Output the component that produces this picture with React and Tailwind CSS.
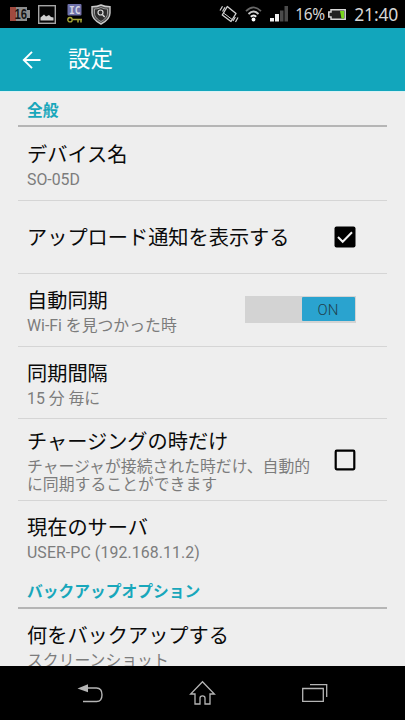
import React from 'react';

function StatusBar() {
  return (
    <div className="flex h-7 shrink-0 items-center justify-between bg-black pl-[10px] pr-[7px]">
      <div className="flex items-center">
        {/* Battery percent */}
        <svg width="20" height="16" viewBox="0 0 20 16">
          <path d="M0 1h17v3h3v8h-3v3H0z" fill="#8d8d8d" />
          <path d="M0 1h6v14H0z" fill="#a04a3f" />
          <text x="4.500" y="13" fill="#161616" fontSize="14" fontWeight="700" fontFamily="Liberation Sans, sans-serif" textLength="12.500" lengthAdjust="spacingAndGlyphs">16</text>
        </svg>
        <svg className="ml-[8px]" width="18" height="19" viewBox="0 0 18 19">
          <rect x=".7" y=".7" width="16.600" height="17.600" fill="#050505" stroke="#a5a5a5" strokeWidth="1.400" />
          <path d="M2.500 15.500v-3l3.500-3 2 2 3-1.500 2 2 2.500.5v3z" fill="#cfcfcf" />
        </svg>
        <svg className="ml-[11px]" width="16" height="20" viewBox="0 0 16 20">
          <rect x=".5" y="0" width="14" height="11.500" rx="1" fill="#6e70a8" />
          <text x="2" y="9.500" fill="#d5d5e2" fontSize="11" fontWeight="700" fontFamily="DejaVu Sans Mono, monospace" textLength="11.500" lengthAdjust="spacingAndGlyphs">IC</text>
          <path d="M5.500 15.500h9.500M11 15.500v3M14 15.500v3" fill="none" stroke="#a6a637" strokeWidth="1.500" />
          <circle cx="3" cy="15.700" r="2.200" fill="none" stroke="#a6a637" strokeWidth="1.400" />
        </svg>
        <svg className="ml-[8px]" width="20" height="21" viewBox="0 0 20 21">
          <path d="M10 1C7 2.500 4 2.800 1 2.800V9c0 5 4 8.500 9 11 5-2.500 9-6 9-11V2.800C16 2.800 13 2.500 10 1z" fill="#4d4d4d" stroke="#c9c9c9" strokeWidth="1.400" />
          <path d="M10 3.500C8 4.500 6 5 3.500 5v4c0 4 3 6.500 6.500 8.500 3.500-2 6.500-4.500 6.500-8.500V5C14 5 12 4.500 10 3.500z" fill="#2c2c2c" stroke="#9c9c9c" />
          <circle cx="9.500" cy="8.500" r="2.500" fill="none" stroke="#ddd" strokeWidth="1.200" />
          <path d="m11.500 10.700 2.200 2.300" stroke="#ddd" strokeWidth="1.400" />
        </svg>
      </div>

      <div className="flex items-center text-[#d6d6d6]">
        {/* Vibrate */}
        <svg width="20" height="20" viewBox="0 0 20 20" fill="none" stroke="#d0d0d0">
          <path d="m8.300 2.500 8.700 7-5 8-8.700-6.500z" strokeWidth="1.400" strokeLinejoin="round" />
          <path d="m4.500 9 8.700 6.500" strokeWidth="1" />
          <path d="M1 6.500 3.500 2.300M3.500 7.500 6 3.300M14 17l2.300-4M16.500 18l2.500-4.500" strokeWidth="1.200" />
        </svg>
        <svg className="ml-[6px]" width="17" height="16" viewBox="0 0 17 16" fill="none">
          <path d="M1 5.200Q8.500-2.500 16 5.200" stroke="#686868" strokeWidth="1.700" />
          <path d="M3.500 8Q8.500 3 13.500 8" stroke="#c8c8c8" strokeWidth="1.900" />
          <path d="M5.800 10.800Q8.500 8.300 11.200 10.800" stroke="#eee" strokeWidth="1.900" />
          <circle cx="8.500" cy="13.500" r="1.900" fill="#fff" />
        </svg>
        <svg className="ml-[8px]" width="19" height="16" viewBox="0 0 19 16">
          <path d="M0 12h4v3.500H0zM5 8h4v7.500H5z" fill="#f0f0f0" />
          <path d="M10 4.500h3.500v11H10zM14.500 0H18v15.500h-3.500z" fill="#4b4b4b" />
        </svg>
        <span className="ml-[6px] w-[29px] whitespace-nowrap font-['Noto_Sans','Open_Sans',sans-serif] text-[15.5px] leading-[30px] tracking-[-0.4px]">16%</span>
        <svg className="ml-[4px]" width="18" height="11" viewBox="0 0 18 11">
          <path d="M3 .8h14.200v9.400H3V8H.8V3H3z" fill="#222" stroke="#d8d8d8" strokeWidth="1.500" />
          <path d="M12 2h4v7.500h-2.500z" fill="#78d51c" />
        </svg>
        <span className="ml-[8px] whitespace-nowrap font-['Noto_Sans','Open_Sans',sans-serif] text-[17.5px] leading-[30px] tracking-[-0.2px]">21:40</span>
      </div>
    </div>
  );
}

function Header() {
  return (
    <div className="flex h-[64px] shrink-0 items-center border-b border-[#d9f2f5] bg-[#12a6bc] pl-[22px]">
      <svg width="20" height="20" viewBox="0 0 20 20" fill="none" stroke="#fff" strokeWidth="1.900">
        <path d="M18.500 10H2M10 1.800 1.800 10l8.200 8.200" />
      </svg>
      <h1 className="ml-[26px] pb-[2px] text-[22.5px] leading-8 text-white">設定</h1>
    </div>
  );
}

function SectionTitle({ children, className }) {
  return (
    <h2 className={`shrink-0 border-b-2 border-[#b5b5b5] pl-[9px] text-[15.75px] font-bold text-[#18a7bb] ${className}`}>
      {children}
    </h2>
  );
}

function Row({ title, summary, className, children }) {
  return (
    <div className={`flex shrink-0 items-center border-b border-[#d5d5d5] pl-[9px] pr-[31px] ${className}`}>
      <div className={`min-w-0 flex-1 ${summary ? 'pt-[2px]' : 'pt-px'}`}>
        <p className="whitespace-nowrap text-[20.2px] leading-[28px] text-[#0a0a0a]">{title}</p>
        {summary && <p className="mt-[2px] whitespace-pre-line text-[15.85px] leading-[18px] text-[#7c7c7c]">{summary}</p>}
      </div>
      {children}
    </div>
  );
}

function Checkbox({ checked }) {
  return (
    <svg className="shrink-0" width="22" height="22" viewBox="0 0 22 22">
      {checked ? (
        <>
          <rect x=".5" y=".5" width="21" height="21" rx="2" fill="#000" />
          <path d="m4 11 4.700 4.800L18 6.200" fill="none" stroke="#f2f2f2" strokeWidth="2" />
        </>
      ) : (
        <rect x="1.700" y="1.700" width="18.600" height="18.600" rx="1" fill="none" stroke="#000" strokeWidth="2.200" />
      )}
    </svg>
  );
}

function Toggle() {
  return (
    <div className="mb-[2px] flex h-[27px] w-[111px] shrink-0 justify-end bg-[#d3d3d3] p-[1.5px]">
      <div className="flex w-[53px] items-center justify-center rounded-[1px] bg-[#2aa3cf] pt-[2px] text-[15px] font-light text-[#20414d]">
        ON
      </div>
    </div>
  );
}

function NavBar() {
  return (
    <div className="flex h-[54px] shrink-0 items-center bg-black pl-[77px]">
      <svg width="27" height="20" viewBox="0 0 27 20">
        <path d="M10 5h9.500q5.500 0 5.500 6.800T19.500 18.500H6" fill="none" stroke="#b5b5b5" strokeWidth="1.400" />
        <path d="M.5 5.500 11 1.300v8z" fill="#b5b5b5" />
      </svg>
      <svg className="ml-[85px]" width="27" height="26" viewBox="0 0 27 26" fill="none" stroke="#b5b5b5" strokeWidth="1.300">
        <path d="M13.500 1.700 1.600 14H6v10h5v-6q0-2.200 2.500-2.200T16 18v6h5V14h4.400z" />
      </svg>
      <svg className="ml-[85px]" width="27" height="20" viewBox="0 0 27 20" fill="none" stroke="#b5b5b5" strokeWidth="1.300">
        <path d="M1.700 5.500h20.600v12.800H1.700zM9 1.700h16.700V14" />
      </svg>
    </div>
  );
}

export default function App() {
  return (
    <div className="flex h-[720px] w-[405px] flex-col overflow-hidden bg-[#eee] font-['Roboto','Noto_Sans_CJK_JP',sans-serif]">
      <StatusBar />
      <Header />

      <div className="flex min-h-0 flex-1 flex-col overflow-hidden pl-[18px] pr-[18px]">
        <SectionTitle className="h-[35px] leading-[37px]">全般</SectionTitle>
        <Row className="h-[74px]" title="デバイス名" summary="SO-05D" />
        <Row className="h-[73px]" title="アップロード通知を表示する">
          <Checkbox checked />
        </Row>
        <Row className="h-[73px]" title="自動同期" summary="Wi-Fi を見つかった時">
          <Toggle />
        </Row>
        <Row className="h-[72px]" title="同期間隔" summary="15 分 毎に" />
        <Row className="h-[82px]" title="チャージングの時だけ" summary={'チャージャが接続された時だけ、自動的\nに同期することができます'}>
          <Checkbox />
        </Row>
        <Row className="h-[72px] border-transparent" title="現在のサーバ" summary={<span className="tracking-[0.1px]">USER-PC (192.168.11.2)</span>} />
        <SectionTitle className="h-[36px] leading-[38px]">バックアップオプション</SectionTitle>
        <Row className="h-[73px]" title="何をバックアップする" summary="スクリーンショット" />
      </div>

      <NavBar />
    </div>
  );
}
